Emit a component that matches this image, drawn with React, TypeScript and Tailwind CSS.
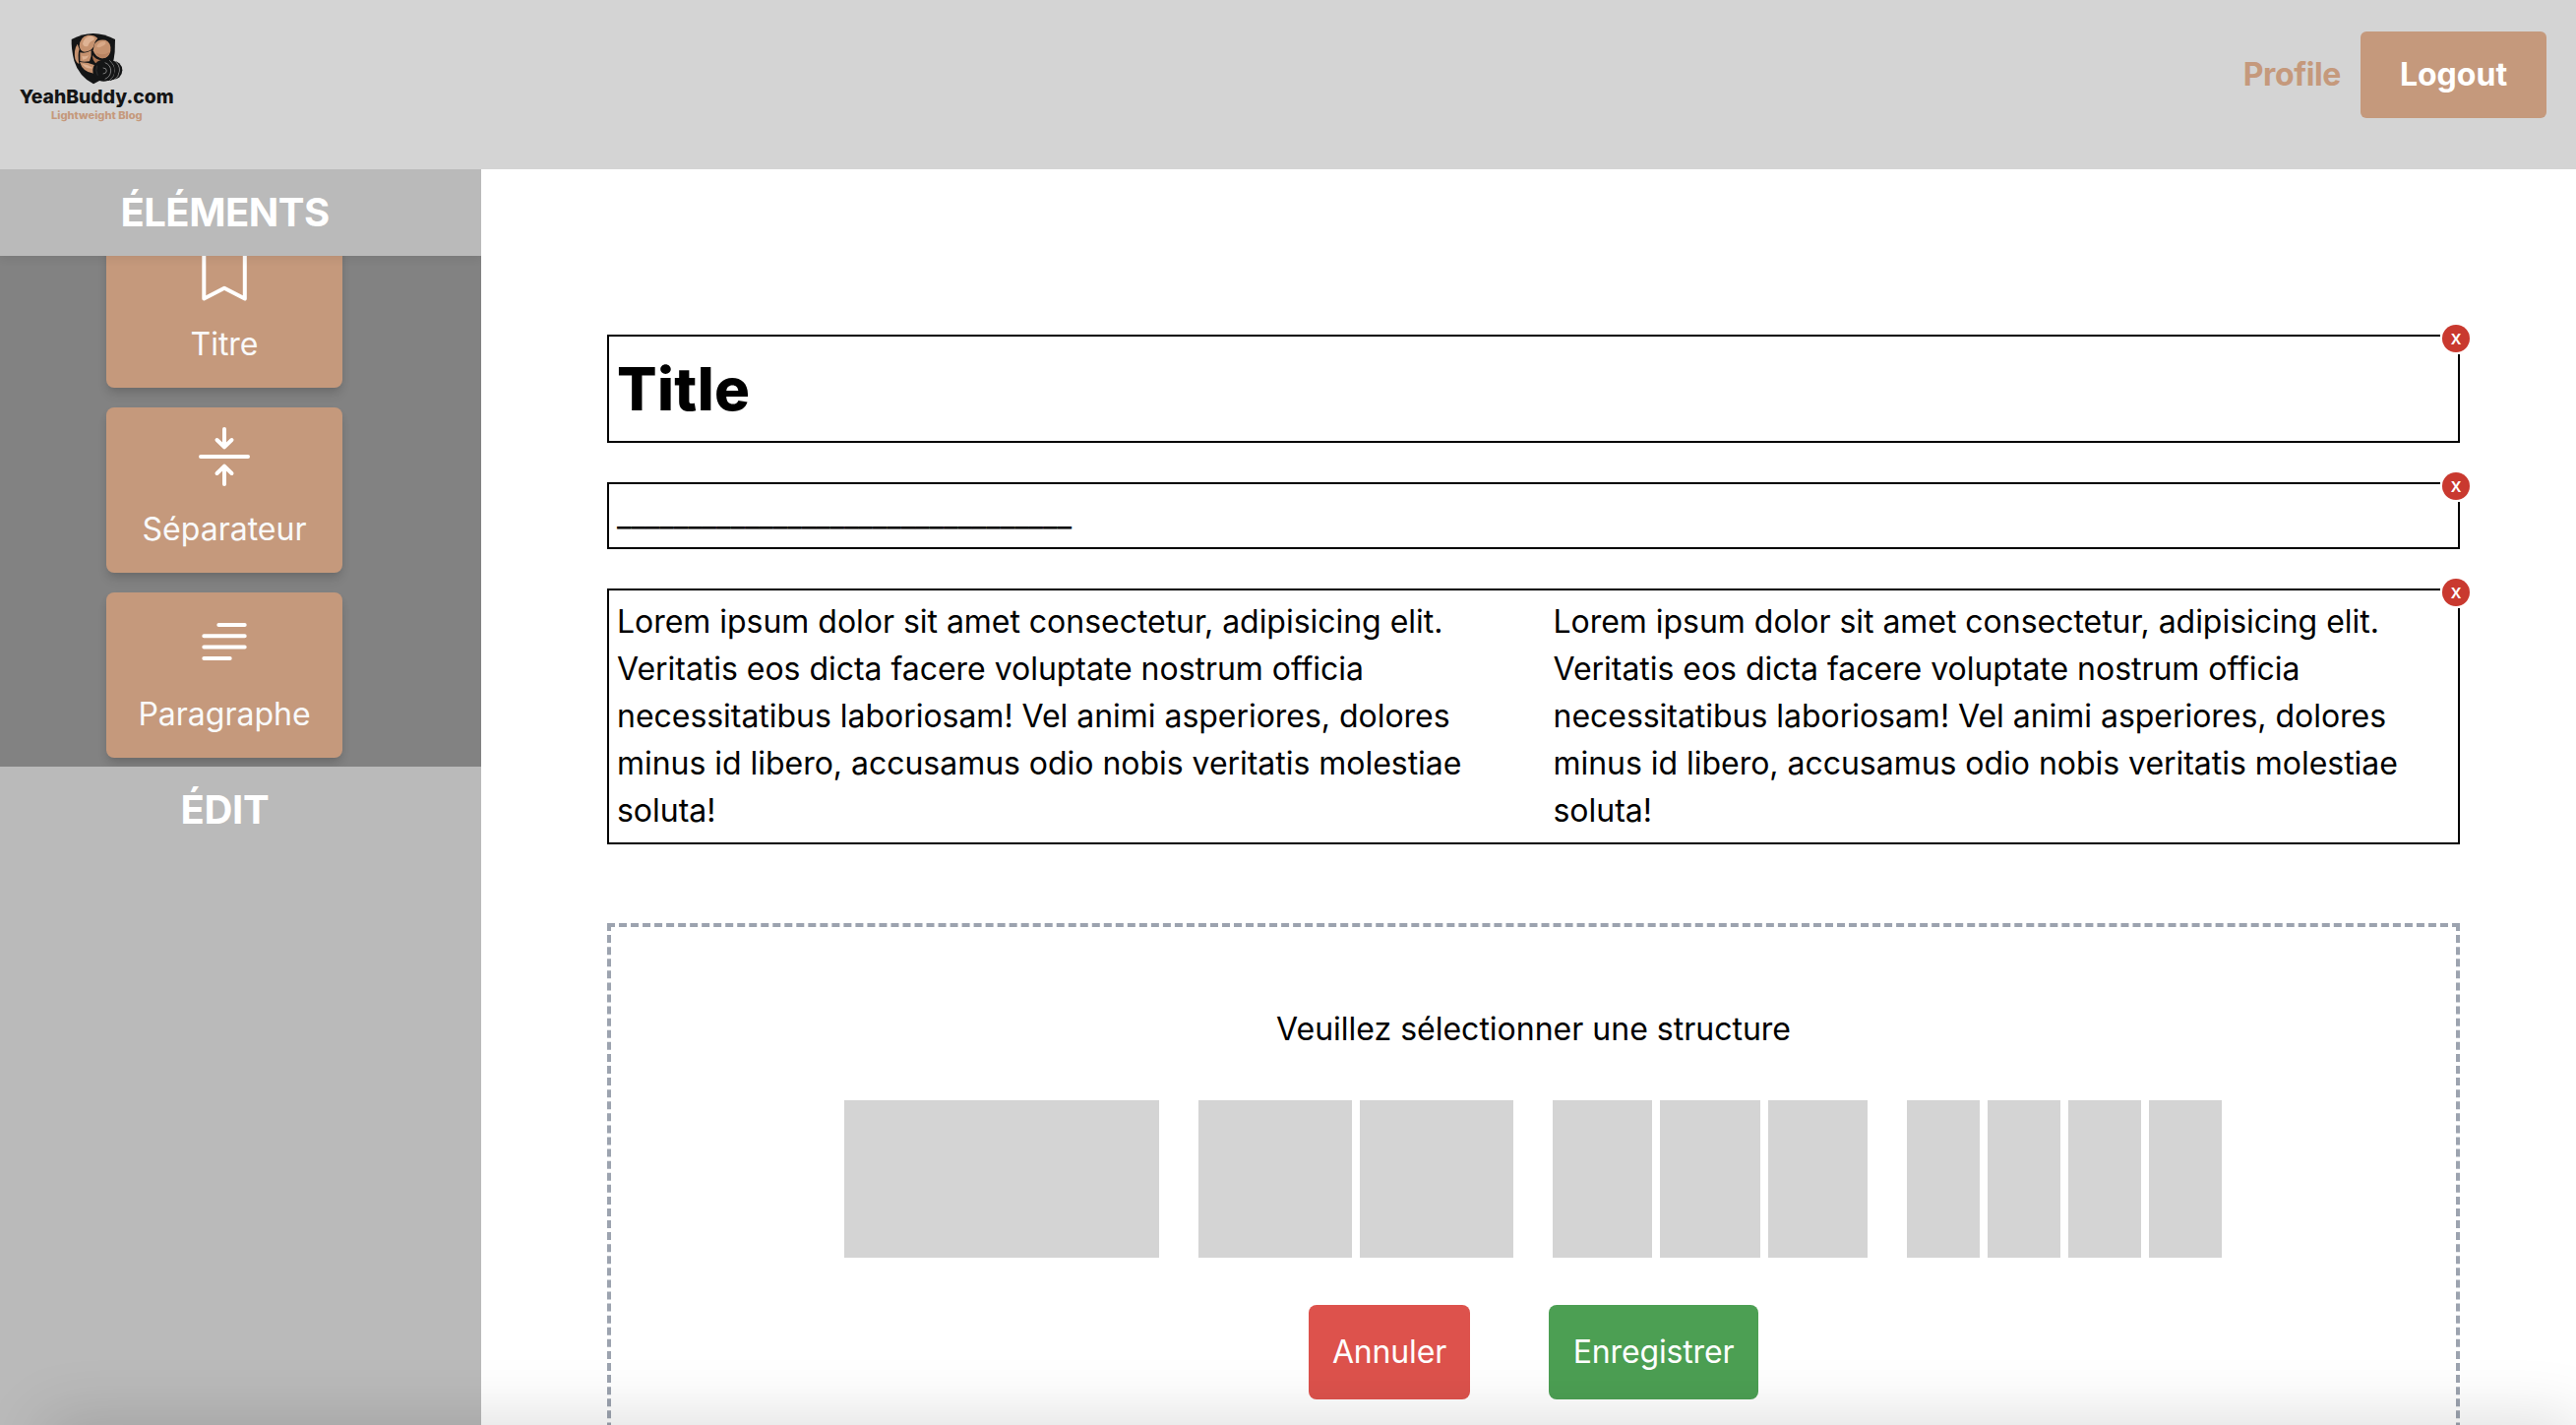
import React from "react";

const LOREM =
  "Lorem ipsum dolor sit amet consectetur, adipisicing elit. Veritatis eos dicta facere voluptate nostrum officia necessitatibus laboriosam! Vel animi asperiores, dolores minus id libero, accusamus odio nobis veritatis molestiae soluta!";

function Logo() {
  return (
    <svg viewBox="0 0 600 390" className="h-[130px] w-[200px]">
      <path d="M218 120 Q284 84 351 120 L350 158 Q348 180 342 200 L330 232 L285 256 Q240 232 226 185 Q217 150 218 120Z" fill="#141516" />
      {/* shoulder and bicep */}
      <path d="M242 140 Q244 112 268 107 Q290 106 298 117 Q288 126 286 142 Q276 158 258 158 Q244 156 242 140Z" fill="#c6926f" />
      <path d="M252 134 Q256 112 276 110 Q292 112 286 122 Q272 126 268 140 Q258 146 252 134Z" fill="#dfb394" />
      <path d="M288 134 Q298 118 322 122 Q340 130 337 156 Q332 177 312 178 Q290 174 284 154Z" fill="#c6926f" />
      <path d="M294 142 Q302 126 320 127 Q328 134 310 142 Q300 148 294 142Z" fill="#d9a988" />
      <path d="M292 160 Q312 172 335 158 Q330 178 310 178 Q296 174 292 160Z" fill="#b98462" />
      {/* side and chest */}
      <path d="M236 134 Q224 152 229 180 Q233 192 241 196 Q236 166 242 150Z" fill="#c6926f" />
      <path d="M244 160 Q262 164 278 154 Q280 170 273 187 Q252 190 244 186Z" fill="#c6926f" />
      <path d="M250 170 Q262 174 270 168 Q266 182 252 182Z" fill="#dfb394" />
      {/* forearm */}
      <path d="M282 168 Q292 182 310 184 L294 194 Q282 188 282 168Z" fill="#a8714f" />
      <path d="M243 189 Q270 190 294 200 L286 224 Q252 220 243 189Z" fill="#c6926f" />
      <path d="M250 194 Q268 196 284 208 Q262 212 250 194Z" fill="#dfb394" />
      {/* dumbbell */}
      <circle cx="344" cy="214" r="29" fill="#141516" />
      <path d="M348 184 Q366 198 364 216 Q362 236 348 244" fill="none" stroke="#bdbdbd" strokeWidth="2" />
      <circle cx="330" cy="214" r="32" fill="#141516" />
      <path d="M334 184 Q350 198 349 216 Q347 236 334 245" fill="none" stroke="#bdbdbd" strokeWidth="2" />
      <circle cx="316" cy="215" r="33" fill="#141516" />
      <path d="M320 191 Q338 198 338 216 Q337 234 320 241" fill="none" stroke="#b0b0b0" strokeWidth="2" />
      <path d="M314 207 Q325 207 325 216 Q325 224 314 225" fill="none" stroke="#909090" strokeWidth="2.5" />
      <path d="M296 200 Q290 216 298 230" fill="none" stroke="#3b3b3b" strokeWidth="2" />
      <text x="59" y="316" textLength="471" lengthAdjust="spacingAndGlyphs" fontSize="57" fontWeight="800" fill="#141516">
        YeahBuddy.com
      </text>
      <text x="156" y="364" textLength="278" lengthAdjust="spacingAndGlyphs" fontSize="30" fontWeight="800" fill="#c5997c">
        Lightweight Blog
      </text>
    </svg>
  );
}

const icons = {
  titre: "M9.3 4V57.5L30 46.8L50.8 57.5V4Z",
  separateur: "M30 2V20M22.5 13L30 20.3L37.5 13M6 30H54M30 58V40M22.5 47L30 39.7L37.5 47",
  paragraphe: "M24.3 13H50.7M9.3 24.3H50.7M9.3 35.6H50.7M9.3 47H35.7",
};

function ElementCard({ icon, label }: { icon: keyof typeof icons; label: string }) {
  return (
    <div className="flex h-[168px] w-60 shrink-0 flex-col items-center gap-5 rounded-lg bg-[#c5997c] pt-5 text-gray-50 shadow-[0_8px_12px_-2px_rgba(0,0,0,0.1),0_4px_8px_-2px_rgba(0,0,0,0.12)]">
      <svg viewBox="0 0 60 60" className="size-[60px] shrink-0" fill="none" stroke="white" strokeWidth="4" strokeLinecap="round" strokeLinejoin="round">
        <path d={icons[icon]} />
      </svg>
      <span>{label}</span>
    </div>
  );
}

function Block({ children }: { children: React.ReactNode }) {
  return (
    <div className="relative border-2 border-black p-2">
      {children}
      <button className="absolute -top-[14px] -right-[14px] flex size-8 items-center justify-center bg-white">
        <span className="flex size-7 items-center justify-center rounded-full bg-[#c9392f] pb-[3px] text-xl leading-none font-medium text-white">
          x
        </span>
      </button>
    </div>
  );
}

export default function App() {
  return (
    <div className="relative flex h-[1448px] w-full flex-col overflow-hidden bg-white font-['Inter',sans-serif] text-[32px] leading-[48px] text-black">
      <header className="flex h-[172px] shrink-0 items-start justify-between bg-[#d4d4d4] pr-[30px]">
        <Logo />
        <nav className="flex items-center gap-5 pt-8 font-bold">
          <a className="tracking-[-0.4px] text-[#c5997c]">Profile</a>
          <button className="h-[88px] w-[189px] rounded-md bg-[#c5997c] text-white">Logout</button>
        </nav>
      </header>

      <div className="flex min-h-0 flex-1">
        <aside className="flex w-[489px] shrink-0 flex-col overflow-hidden bg-[#bababa]">
          <h2 className="z-10 flex h-[88px] shrink-0 items-center justify-center bg-[#bababa] pr-8 text-[40px] leading-[60px] font-bold tracking-[-0.5px] text-white shadow-[0_4px_8px_rgba(0,0,0,0.06)]">
            ÉLÉMENTS
          </h2>
          <div className="flex h-[519px] shrink-0 flex-col items-center justify-end gap-5 overflow-hidden bg-[#828282] pr-[33px] pb-[9px]">
            <ElementCard icon="titre" label="Titre" />
            <ElementCard icon="separateur" label="Séparateur" />
            <ElementCard icon="paragraphe" label="Paragraphe" />
          </div>
          <h2 className="flex h-[87px] items-center justify-center pr-8 text-[40px] leading-[60px] font-bold tracking-[-0.3px] text-white">
            ÉDIT
          </h2>
        </aside>

        <main className="flex flex-1 flex-col gap-10 pt-[168px] pr-[118px] pl-32">
          <Block>
            <h1 className="text-[60px] leading-[90px] font-extrabold tracking-[0.3px]">Title</h1>
          </Block>
          <Block>
            <p className="tracking-[-0.16px]">________________________________</p>
          </Block>
          <Block>
            <div className="grid grid-cols-2 gap-10 tracking-[-0.03px]">
              <p>{LOREM}</p>
              <p>{LOREM}</p>
            </div>
          </Block>

          <section className="mt-10 flex h-[600px] shrink-0 flex-col items-center border-4 border-dashed border-[#9ca3af] pt-20">
            <p>Veuillez sélectionner une structure</p>
            <div className="mt-12 flex gap-10 pr-px">
              {[1, 2, 3, 4].map((count) => (
                <div key={count} className="flex h-40 w-80 gap-2">
                  {Array.from({ length: count }, (_, i) => (
                    <div key={i} className="flex-1 bg-[#d4d4d4]" />
                  ))}
                </div>
              ))}
            </div>
            <div className="mt-12 flex gap-20 tracking-[-0.15px] text-white">
              <button className="w-[164px] rounded-lg bg-[#dd524c] py-6 text-center">Annuler</button>
              <button className="w-[213px] rounded-lg bg-[#4c9f53] py-6 text-center">Enregistrer</button>
            </div>
          </section>
        </main>
      </div>

      {/* soft shade along the window's bottom edge */}
      <div className="pointer-events-none absolute right-0 -bottom-[60px] left-[50px] h-[60px] shadow-[0_0_66px_4px_rgba(0,0,0,0.15)]" />
    </div>
  );
}
